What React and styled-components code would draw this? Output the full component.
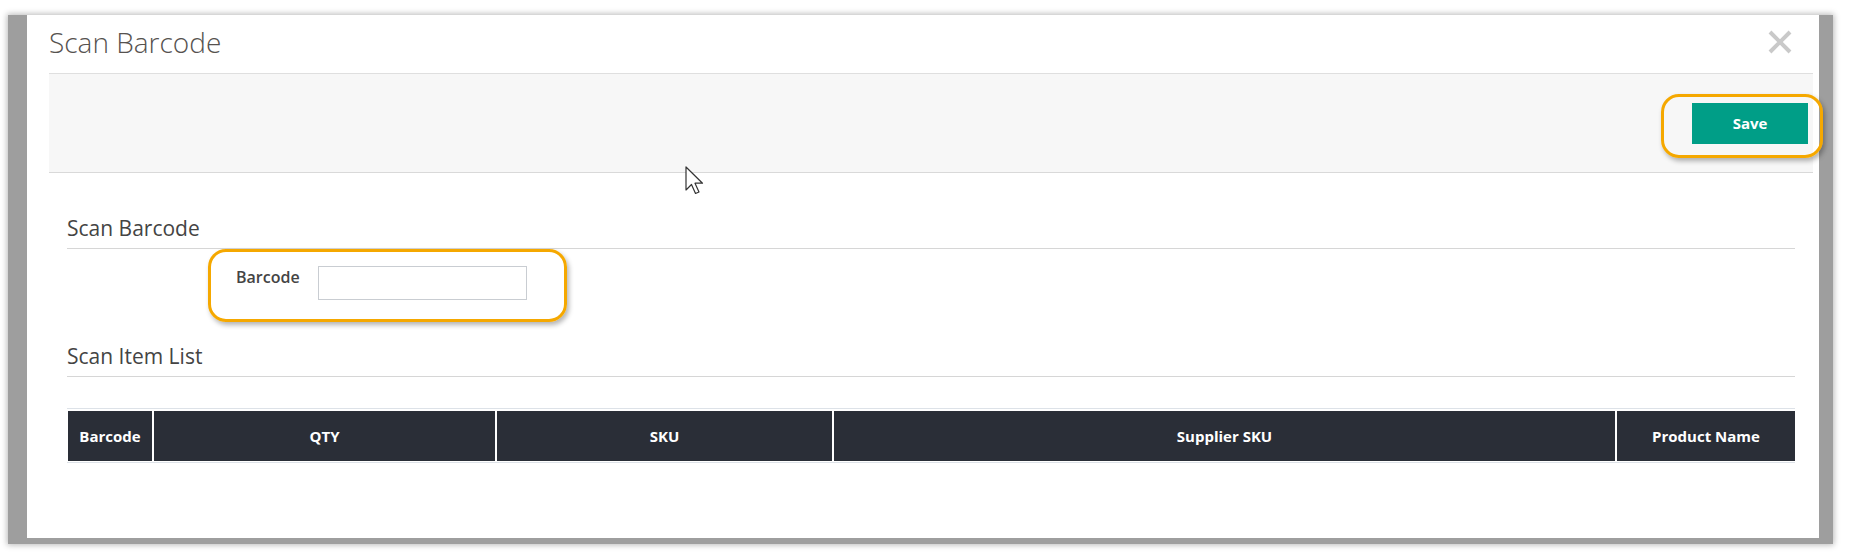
import React from 'react';
import styled, { createGlobalStyle } from 'styled-components';

const GlobalStyle = createGlobalStyle`
  html, body {
    margin: 0;
    padding: 0;
    background: #fff;
  }
  body {
    font-family: "Open Sans", "Liberation Sans", sans-serif;
    color: #333;
  }
  * {
    box-sizing: border-box;
  }
`;

const Page = styled.div`
  padding: 15px 0 0 8px;
  height: 553px;
  overflow: hidden;
`;

// grey edge left by the screenshot tool
const ShadowFrame = styled.div`
  display: inline-block;
  padding: 0 14px 6px 19px;
  background: rgba(0, 0, 0, 0.38);
  box-shadow: 0 0 6px 1px rgba(0, 0, 0, 0.28);
`;

const Modal = styled.div`
  position: relative;
  width: 1792px;
  height: 523px;
  background: #fff;
  padding: 0 6px 0 22px;
`;

const ModalHeader = styled.div`
  height: 58px;
  display: flex;
  align-items: center;
  justify-content: space-between;
  padding-bottom: 4px;
`;

const Title = styled.h4`
  margin: 0;
  font-size: 28px;
  font-weight: 300;
  line-height: 1;
  color: #56524f;
`;

const CloseButton = styled.button`
  display: flex;
  padding: 0;
  margin-right: 21px;
  border: none;
  background: none;
  cursor: pointer;
`;

const Toolbar = styled.div`
  height: 100px;
  display: flex;
  align-items: center;
  justify-content: flex-end;
  padding-right: 5px;
  background: #f7f7f7;
  border-top: 1px solid #dfdfdf;
  border-bottom: 1px solid #d9d9d9;
`;

// orange annotation ring drawn over an element
const Highlight = styled.div`
  position: relative;
  display: ${(p) => (p.$inline ? 'inline-flex' : 'flex')};
  &::after {
    content: '';
    position: absolute;
    top: ${(p) => -p.$t}px;
    left: ${(p) => -p.$l}px;
    right: ${(p) => -p.$r}px;
    bottom: ${(p) => -p.$b}px;
    border: 3px solid #f5a800;
    border-radius: 18px;
    box-shadow: 2px 3px 5px rgba(0, 0, 0, 0.3);
    pointer-events: none;
  }
`;

const SaveButton = styled.button`
  width: 116px;
  height: 41px;
  border: none;
  background: #009e87;
  color: #fff;
  font-family: "Open Sans", sans-serif;
  font-size: 15px;
  font-weight: 700;
  cursor: pointer;
`;

const Body = styled.div`
  padding: 0 18px;
`;

const SectionTitle = styled.h5`
  margin: ${(p) => p.$top}px 0 0;
  padding-bottom: 6px;
  font-size: 21px;
  font-weight: 400;
  line-height: 27px;
  color: #444;
  border-bottom: 1px solid #d6d6d6;
`;

const FieldRow = styled.div`
  display: flex;
  padding-left: 169px;
  margin-top: 17px;
`;

const Label = styled.label`
  font-size: 16px;
  font-weight: 600;
  line-height: 22px;
  color: #444;
`;

const Input = styled.input`
  width: 209px;
  height: 34px;
  margin-left: 18px;
  border: 1px solid #c9cdd2;
  font-family: "Open Sans", sans-serif;
  font-size: 14px;
  padding: 4px 8px;
`;

const TableWrap = styled.div`
  margin-top: 31px;
  padding: 2px 0 1px 1px;
  border-top: 1px solid #dde2e8;
  border-bottom: 1px solid #dde2e8;
`;

const Table = styled.table`
  width: 100%;
  table-layout: fixed;
  border-collapse: separate;
  border-spacing: 0;
`;

const Th = styled.th`
  height: 50px;
  padding: 0 4px;
  background: #2a2e37;
  color: #fff;
  font-size: 15px;
  font-weight: 700;
  text-align: center;
  white-space: nowrap;
  & + & {
    border-left: 2px solid #fff;
  }
`;

const Cursor = styled.svg`
  position: absolute;
  left: 658px;
  top: 151px;
  pointer-events: none;
`;

const columns = [
  { label: 'Barcode', width: 84 },
  { label: 'QTY', width: 343 },
  { label: 'SKU', width: 337 },
  { label: 'Supplier SKU', width: 783 },
  { label: 'Product Name' },
];

const App = () => {
  return (
    <Page>
      <GlobalStyle />
      <ShadowFrame>
        <Modal>
          <ModalHeader>
            <Title>Scan Barcode</Title>
            <CloseButton aria-label="Close">
              <svg width="24" height="24" viewBox="0 0 24 24">
                <path d="M2 2 L22 22 M22 2 L2 22" stroke="#c9c9c9" strokeWidth="4" />
              </svg>
            </CloseButton>
          </ModalHeader>

          <Toolbar>
            <Highlight $inline $t={9} $l={31} $r={15} $b={14}>
              <SaveButton>Save</SaveButton>
            </Highlight>
          </Toolbar>

          <Body>
            <SectionTitle $top={42}>Scan Barcode</SectionTitle>
            <FieldRow>
              <Highlight $inline $t={17} $l={28} $r={40} $b={22}>
                <Label htmlFor="barcode">Barcode</Label>
                <Input id="barcode" type="text" />
              </Highlight>
            </FieldRow>

            <SectionTitle $top={43}>Scan Item List</SectionTitle>
            <TableWrap>
              <Table>
                <colgroup>
                  {columns.map((c) => (
                    <col key={c.label} style={c.width ? { width: c.width } : undefined} />
                  ))}
                </colgroup>
                <thead>
                  <tr>
                    {columns.map((c) => (
                      <Th key={c.label}>{c.label}</Th>
                    ))}
                  </tr>
                </thead>
              </Table>
            </TableWrap>
          </Body>

          <Cursor width="20" height="30" viewBox="0 0 20 30">
            <path
              d="M1 1 L1 24 L6.5 18.5 L10.5 27.5 L14 26 L10 17.2 L17.5 17.2 Z"
              fill="#fff"
              stroke="#333"
              strokeWidth="1.2"
              strokeLinejoin="round"
            />
          </Cursor>
        </Modal>
      </ShadowFrame>
    </Page>
  );
};

export default App;
